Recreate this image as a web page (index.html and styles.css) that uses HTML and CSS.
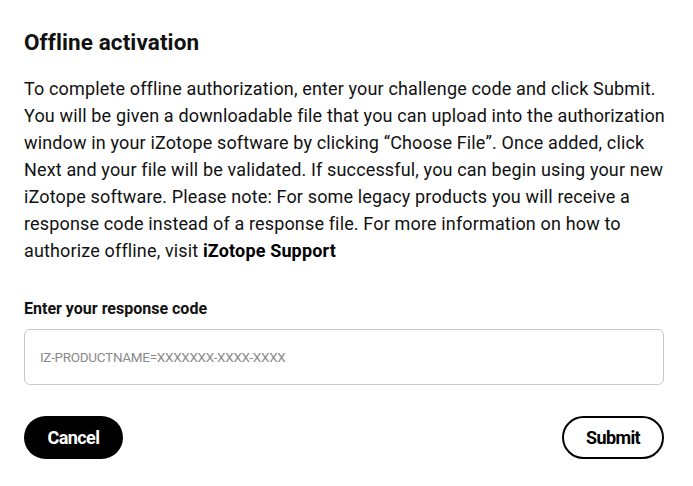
FILE: index.html
```html
<!DOCTYPE html>
<html>
<head>
<meta charset="utf-8">
<link rel="stylesheet" href="styles.css">
</head>
<body>
<div class="dialog">
  <h1 class="title">Offline activation</h1>
  <p class="desc">To complete offline authorization, enter your challenge code and click Submit. You will be given a downloadable file that you can upload into the authorization window in your iZotope software by clicking “Choose File”. Once added, click Next and your file will be validated. If successful, you can begin using your new iZotope software. Please note: For some legacy products you will receive a response code instead of a response file. For more information on how to authorize offline, visit <a class="link" href="#">iZotope Support</a></p>
  <label class="label" for="code">Enter your response code</label>
  <input class="input" id="code" type="text" placeholder="IZ-PRODUCTNAME=XXXXXXX-XXXX-XXXX">
  <div class="actions">
    <button class="btn btn-cancel">Cancel</button>
    <button class="btn btn-submit">Submit</button>
  </div>
</div>
</body>
</html>
```

FILE: styles.css
```css
* { box-sizing: border-box; }
html, body { margin: 0; background: #fff; }
body { font-family: Roboto, "Noto Sans", sans-serif; color: #111; }
.dialog {
  width: 640px;
  margin-left: 24px;
  padding-top: 27px;
  display: flex;
  flex-direction: column;
}
.title {
  margin: 0;
  font-size: 22.5px;
  font-weight: 700;
  line-height: 30px;
  letter-spacing: 0.1px;
  color: #111;
}
.desc {
  margin: 18px -8px 0 0;
  font-size: 18px;
  line-height: 27px;
  letter-spacing: 0.15px;
  color: #111;
}
.link { color: #000; font-weight: 700; text-decoration: none; }
.label {
  margin-top: 35px;
  font-size: 16px;
  font-weight: 700;
  line-height: 20px;
}
.input {
  margin-top: 10px;
  height: 56px;
  width: 640px;
  border: 1px solid #c9c9c9;
  border-radius: 6px;
  padding: 0 15px;
  font-family: Roboto, sans-serif;
  font-size: 13.5px;
  letter-spacing: -0.3px;
  color: #111;
  outline: none;
}
.input::placeholder { color: #8a8a8a; }
.actions {
  margin-top: 31px;
  display: flex;
  justify-content: space-between;
}
.btn {
  height: 43px;
  border-radius: 22px;
  font-family: Roboto, sans-serif;
  font-size: 18px;
  font-weight: 700;
  cursor: pointer;
  letter-spacing: -0.6px;
}
.btn-cancel {
  width: 99px;
  background: #000;
  color: #fff;
  border: none;
}
.btn-submit {
  width: 102px;
  background: #fff;
  color: #000;
  border: 2px solid #000;
}
```
